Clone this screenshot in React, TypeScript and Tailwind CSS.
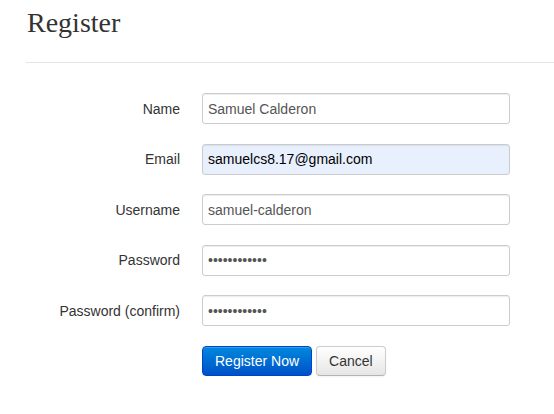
import React from 'react';

const fields = [
  { label: 'Name', type: 'text', value: 'Samuel Calderon' },
  { label: 'Email', type: 'email', value: 'samuelcs8.17@gmail.com', autofill: true },
  { label: 'Username', type: 'text', value: 'samuel-calderon' },
  { label: 'Password', type: 'password', value: 'abcdefghijkl' },
  { label: 'Password (confirm)', type: 'password', value: 'abcdefghijkl' },
];

export default function App() {
  return (
    <div className="min-h-[414px] w-[554px] bg-white pl-[26px] pt-[5px] font-['Liberation_Sans',Arial,sans-serif] text-[14px] text-[#333]">
      <h1 className="pl-[1px] font-['Liberation_Serif','Times_New_Roman',serif] text-[28px] leading-[36px] font-normal text-[#333]">
        Register
      </h1>
      <hr className="mt-[21px] border-0 border-t border-[#e5e5e5]" />

      <form className="mt-[30px] flex flex-col gap-[19.5px]" onSubmit={(e) => e.preventDefault()}>
        {fields.map((f) => (
          <div key={f.label} className="flex items-center">
            <label className="w-[154px] text-right leading-[20px]">{f.label}</label>
            <input
              type={f.type}
              defaultValue={f.value}
              className={
                'ml-[22px] h-[31px] w-[308px] rounded-[3px] border border-[#ccc] px-[5px] text-[14px] outline-none shadow-[inset_0_1px_1px_rgba(0,0,0,0.075)] ' +
                (f.autofill ? 'bg-[#e8f0fe] text-black' : 'bg-white text-[#555]')
              }
            />
          </div>
        ))}

        <div className="mt-[0.5px] flex gap-[4px] pl-[176px]">
          <button
            type="submit"
            className="h-[30px] rounded-[4px] border border-[#0044cc] bg-gradient-to-b from-[#0088dd] to-[#0050c8] px-[12px] text-[14px] text-white shadow-[inset_0_1px_0_rgba(255,255,255,0.2)]"
          >
            Register Now
          </button>
          <button
            type="button"
            className="h-[30px] rounded-[4px] border border-[#ccc] border-b-[#b3b3b3] bg-gradient-to-b from-white to-[#e6e6e6] px-[12px] text-[14px] text-[#333] shadow-[inset_0_1px_0_rgba(255,255,255,0.2),0_1px_2px_rgba(0,0,0,0.05)]"
          >
            Cancel
          </button>
        </div>
      </form>
    </div>
  );
}
